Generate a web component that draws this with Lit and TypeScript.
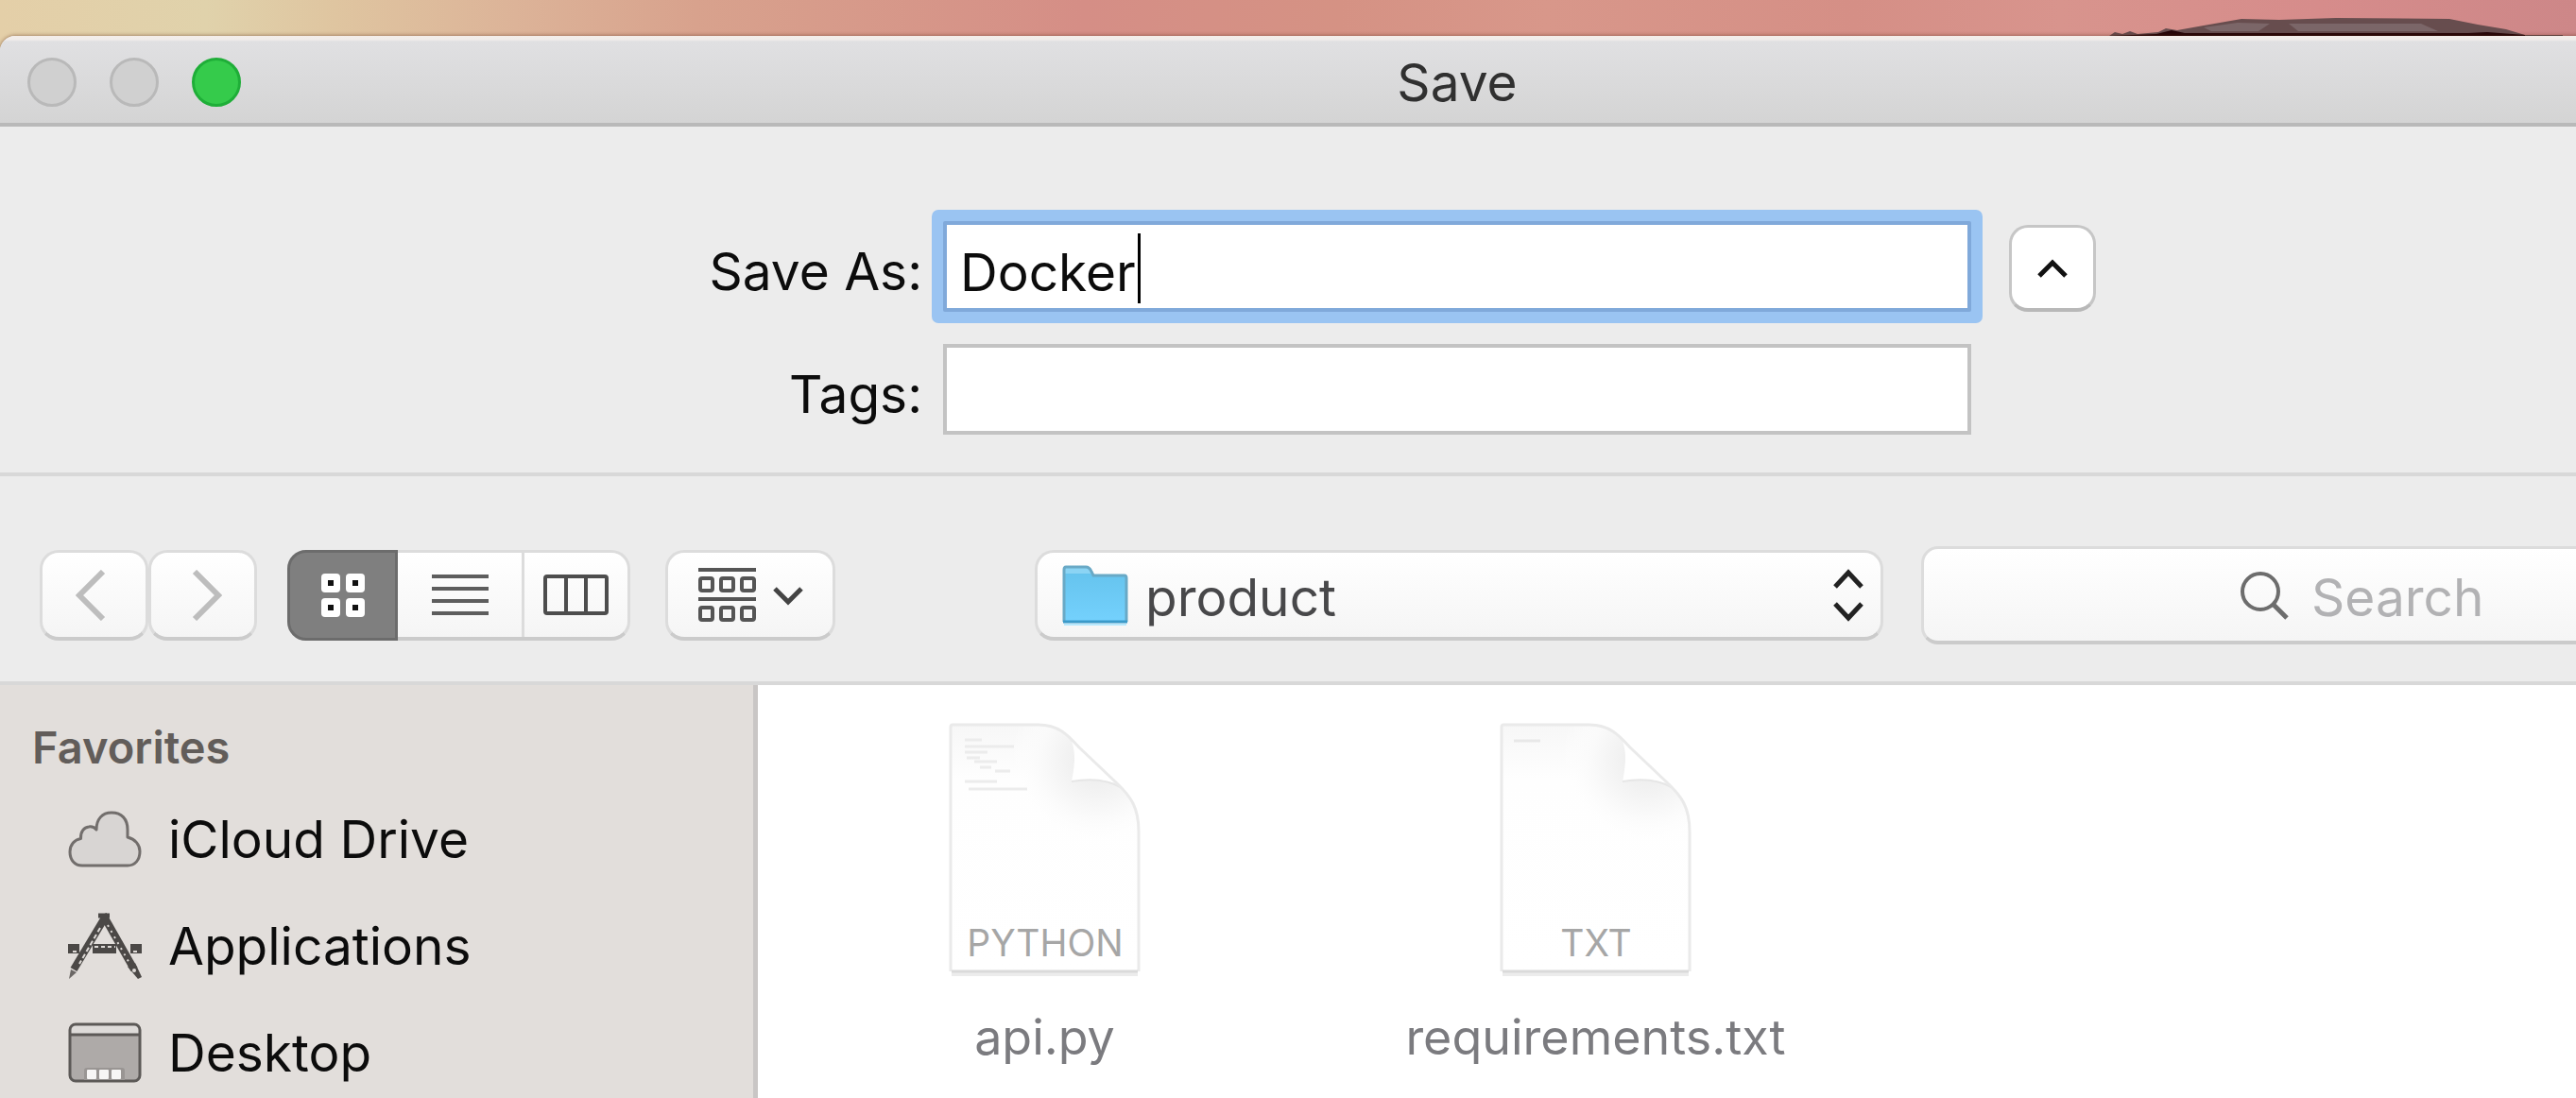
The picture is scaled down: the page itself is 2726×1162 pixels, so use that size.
import { LitElement, html, css, svg, nothing } from "lit";
import { customElement, property, state } from "lit/decorators.js";

interface Place {
  name: string;
  icon: unknown;
}

interface FileEntry {
  name: string;
  kind: string;
  preview: unknown;
}

const cloudIcon = html`<svg class="place-icon" width="78" height="72" viewBox="0 0 78 72" aria-hidden="true">
  <path
    d="M15 64C7 64 2 58 2 49.500C2 42 7 36.500 13.500 35.500C13 28 17 23.500 22 23C25 22.500 28 23.500 30 26C30 15 36 8 46 8C57 8 63 15 63 26L63 34C71 36 76 42 76 49C76 58 71 64 63 64Z"
    fill="#d8d5d3" stroke="#726e6c" stroke-width="3" stroke-linejoin="round" />
</svg>`;

const applicationsIcon = html`<svg class="place-icon" width="78" height="72" viewBox="0 0 78 72" aria-hidden="true">
  <g fill="none" stroke="#4b4846" stroke-linecap="butt">
    <path d="M39 6L6 61" stroke-width="8" />
    <path d="M37 3L70 61" stroke-width="8" />
    <path d="M32 4H44" stroke-width="5" />
    <path d="M0 39H12M26 39H51M66 39H78" stroke-width="10" />
  </g>
  <g fill="none" stroke="#dedad7" stroke-width="2">
    <path d="M34 17L12 55" stroke-dasharray="5 3" />
    <path d="M42 14L66 56" stroke-dasharray="2 5" />
    <path d="M5 42H10M28 37H50M69 42H73" stroke-dasharray="4 3" />
  </g>
  <path d="M1 71L3 61L9 64Z" fill="#6b6765" />
  <path d="M63 58L71 54L78 69L74 71Z" fill="#4b4846" />
  <circle cx="70" cy="62" r="2" fill="#dedad7" />
</svg>`;

const desktopIcon = html`<svg class="place-icon" width="78" height="72" viewBox="0 0 78 72" aria-hidden="true">
  <rect x="2" y="6" width="74" height="60" rx="6" fill="#aeaaa8" />
  <path d="M2 17V12Q2 6 8 6H70Q76 6 76 12V17Z" fill="#dedbd9" />
  <path d="M2 17H76" stroke="#5c5957" stroke-width="3" />
  <rect x="2" y="6" width="74" height="60" rx="6" fill="none" stroke="#5c5957" stroke-width="3" />
  <path d="M17 65V55Q17 52 20 52H57Q60 52 60 55V65Z" fill="#999593" />
  <g fill="#f7f6f5">
    <rect x="20" y="54" width="10" height="10" rx="1" />
    <rect x="33" y="54" width="10" height="10" rx="1" />
    <rect x="46" y="54" width="10" height="10" rx="1" />
  </g>
</svg>`;

const PLACES: Place[] = [
  { name: "iCloud Drive", icon: cloudIcon },
  { name: "Applications", icon: applicationsIcon },
  { name: "Desktop", icon: desktopIcon },
];

const FILES: FileEntry[] = [
  {
    name: "api.py",
    kind: "PYTHON",
    preview: svg`<g stroke="#ececec" stroke-width="3" fill="none">
      <path d="M18 19H36M18 26H70M18 32H42M20 38H34M28 42H52M34 48H46M50 52H66" />
      <path d="M18 63H52M22 71H84" />
    </g>`,
  },
  {
    name: "requirements.txt",
    kind: "TXT",
    preview: svg`<path d="M16 20H44" stroke="#e8e8e8" stroke-width="3" />`,
  },
];

@customElement("file-tile")
export class FileTile extends LitElement {
  @property({ attribute: false }) file?: FileEntry;

  static styles = css`
    :host {
      display: block;
    }
    .tile {
      display: flex;
      flex-direction: column;
      align-items: center;
      width: 100%;
      padding: 0;
      border: 0;
      background: none;
      font-family: inherit;
      color: #7b7b7f;
    }
    .sheet {
      display: block;
    }
    .kind {
      font-family: Inter, "Liberation Sans", sans-serif;
      font-size: 39px;
      fill: #a6a6a6;
    }
    .name {
      margin-top: 28px;
      font-size: 52px;
      line-height: 72px;
      white-space: nowrap;
    }
  `;

  render() {
    if (!this.file) return nothing;
    return html`<button class="tile" type="button" disabled>
      <svg class="sheet" width="206" height="270" viewBox="0 0 206 270" aria-hidden="true">
        <defs>
          <linearGradient id="top" x1="0" y1="0" x2="0" y2="1">
            <stop offset="0" stop-color="#f7f7f7" />
            <stop offset="0.22" stop-color="#fefefe" />
            <stop offset="1" stop-color="#ffffff" />
          </linearGradient>
          <radialGradient id="fold" gradientUnits="userSpaceOnUse" cx="158" cy="40" r="92">
            <stop offset="0" stop-color="#e9e9e9" />
            <stop offset="0.35" stop-color="#f2f2f2" />
            <stop offset="0.65" stop-color="#fafafa" />
            <stop offset="1" stop-color="#ffffff" stop-opacity="0" />
          </radialGradient>
        </defs>
        <path d="M5 3H96C118 3 128 15 139 27L178 64C194 79 202 91 202 116V264H3V5Z" fill="url(#top)" />
        <path d="M5 3H96C118 3 128 15 139 27L178 64C194 79 202 91 202 116V264H3V5Z" fill="url(#fold)" />
        ${this.file.preview}
        <path d="M131 20C136 34 134 48 131 63C148 61 163 61 178 65Z" fill="#ffffff" />
        <path d="M131 63C149 60 168 60 184 70" fill="none" stroke="#e6e6e6" stroke-width="2" />
        <path d="M3 264V5Q3 3 5 3H96C118 3 128 15 139 27L178 64C194 79 202 91 202 116V264" fill="none" stroke="#eaeaea" stroke-width="3" />
        <path d="M4 266H201" stroke="#ececec" stroke-width="6" />
        <path d="M4 264H201" stroke="#dadada" stroke-width="3" />
        <text class="kind" x="103" y="248" text-anchor="middle">${this.file.kind}</text>
      </svg>
      <span class="name">${this.file.name}</span>
    </button>`;
  }
}

@customElement("app-root")
export class AppRoot extends LitElement {
  @state() private fileName = "Docker";
  @state() private view = "icons";

  static styles = css`
    :host {
      display: flex;
      flex-direction: column;
      min-height: 100vh;
      overflow: hidden;
      background: #d9958b;
      font-family: Inter, "Liberation Sans", sans-serif;
      font-size: 55px;
      line-height: 72px;
      color: #0c0c0c;
    }
    * {
      box-sizing: border-box;
    }
    button,
    input,
    select {
      margin: 0;
      font: inherit;
      color: inherit;
    }
    svg {
      display: block;
      flex: none;
    }

    .wallpaper {
      display: flex;
      justify-content: flex-end;
      box-sizing: content-box;
      height: 38px;
      margin-bottom: -18px;
      padding: 0 14px 18px 0;
      background: linear-gradient(90deg, #e4cfa8 0%, #e0d2ab 8%, #dfc5a0 13%, #dcb398 20%, #d8a28d 27%, #d58e86 42%, #d59284 52%, #d8978a 60%, #d58f86 72%, #d8948d 80%, #d68c8b 90%, #cd8788 100%);
    }

    /* The dialog runs past the right edge of the screen. */
    .dialog {
      display: flex;
      flex: 1;
      flex-direction: column;
      width: calc(100% + 358px);
      border-radius: 16px 0 0 0;
      background: #ececec;
      box-shadow: 0 0 4px rgba(80, 30, 10, 0.6);
      overflow: hidden;
    }
    .titlebar {
      display: grid;
      grid-template-columns: 1fr auto 1fr;
      align-items: center;
      height: 96px;
      padding: 6px 29px 0;
      border-bottom: 4px solid #b9b9b9;
      background: linear-gradient(#f4eeea 0, #f1edeb 4px, #e0e0e2 6px, #d4d4d4 100%);
    }
    .lights {
      display: flex;
      gap: 35px;
    }
    .light {
      width: 52px;
      height: 52px;
      padding: 0;
      border: 3px solid #b9b9b9;
      border-radius: 50%;
      background: #d0d0d0;
    }
    .light.zoom {
      border-color: #1fae38;
      background: #35cb4b;
    }
    .title {
      margin: 0;
      font-size: 55px;
      font-weight: 400;
      color: #303030;
    }

    .form {
      display: grid;
      grid-template-columns: 1fr 1088px 1fr;
      row-gap: 34px;
      align-items: center;
      padding: 100px 0 40px;
      border-bottom: 4px solid #d8d8d8;
    }
    .label {
      padding: 10px 22px 0 0;
      text-align: right;
    }
    .field {
      position: relative;
    }
    .text {
      display: block;
      width: 100%;
      height: 96px;
      padding: 12px 14px 0;
      border: 4px solid #c3c3c3;
      border-radius: 0;
      outline: 0;
      background: #ffffff;
    }
    .text.focused {
      border-color: #80a9da;
      box-shadow: 0 0 0 12px #9ac4f2;
      border-radius: 2px;
      caret-color: transparent;
    }
    .caret {
      position: absolute;
      top: 13px;
      left: 206px;
      width: 3px;
      height: 74px;
      background: #000000;
    }
    .collapse {
      display: grid;
      place-items: center;
      width: 92px;
      height: 92px;
      margin: 4px 0 0 40px;
      padding: 0;
      border: 3px solid #c6c6c6;
      border-bottom: 4px solid #b8b8b8;
      border-radius: 20px;
      background: #ffffff;
    }

    .toolbar {
      display: flex;
      align-items: center;
      padding: 74px 117px 39px 42px;
      border-bottom: 4px solid #d8d8d8;
    }
    .control {
      display: flex;
      align-items: center;
      justify-content: center;
      height: 96px;
      padding: 0;
      border: 3px solid #dcdcdc;
      border-bottom: 4px solid #cbcbcb;
      border-radius: 20px;
      background: linear-gradient(#ffffff, #f5f5f5);
    }
    .step {
      width: 115px;
    }
    .back {
      padding-right: 8px;
    }
    .forward {
      padding-left: 8px;
    }
    .views {
      width: 363px;
      margin-left: 32px;
      align-items: stretch;
      justify-content: flex-start;
    }
    .view {
      display: grid;
      place-items: center;
      flex: 1 1 0;
      padding: 0;
      border: 0;
      border-left: 3px solid #dcdcdc;
      background: none;
    }
    .view.list {
      flex: 0 0 131px;
      border-left: 0;
    }
    .view.icons {
      flex: 0 0 117px;
      margin: -3px 0 -4px -3px;
      border: 3px solid #6c6c6c;
      border-radius: 20px 0 0 20px;
      background: #7f7f7f;
    }
    .arrange {
      width: 180px;
      margin-left: 37px;
      gap: 17px;
    }
    .folder {
      width: 898px;
      margin-left: 211px;
      padding: 0 18px 0 26px;
      gap: 18px;
    }
    .folder-select {
      flex: 1;
      min-width: 0;
      height: 76px;
      padding: 4px 0 0;
      border: 0;
      outline: 0;
      appearance: none;
      background: none;
      color: #48484a;
    }
    .search {
      flex: 1;
      height: 104px;
      margin-left: 40px;
      gap: 24px;
      border-radius: 18px;
    }
    .search-input {
      width: 184px;
      height: 76px;
      padding: 4px 0 0;
      border: 0;
      outline: 0;
      background: none;
    }
    .search-input::placeholder {
      color: #b2b2b4;
      opacity: 1;
    }

    .body {
      display: flex;
      flex: 1;
    }
    .sidebar {
      width: 802px;
      padding: 30px 34px 0;
      border-right: 5px solid #c9c6c5;
      background: #e2dedb;
    }
    .group {
      margin: 0;
      font-size: 47px;
      font-weight: 600;
      line-height: 72px;
      color: #625d5a;
    }
    .places {
      margin: 0;
      padding: 4px 0 0;
      list-style: none;
    }
    .place {
      display: flex;
      align-items: center;
      gap: 28px;
      height: 113px;
      padding-left: 38px;
      color: inherit;
      text-decoration: none;
    }
    .files {
      display: grid;
      flex: 1;
      grid-template-columns: repeat(auto-fill, 583px);
      align-content: start;
      padding: 39px 12px 0;
      background: #ffffff;
    }
  `;

  private onName(event: Event) {
    this.fileName = (event.target as HTMLInputElement).value;
  }

  private renderWallpaper() {
    return html`<div class="wallpaper">
      <svg width="480" height="38" viewBox="0 0 480 38" aria-hidden="true">
        <path d="M0 38L6 34L14 36L22 33L30 36L52 34L60 30L72 32L100 27L140 20L180 21L240 19L360 20L390 26L420 31L440 37L480 37V38Z" fill="#674d4e" />
        <path d="M100 29L136 24L170 25L158 33L108 33ZM190 25L330 25L348 33L200 33Z" fill="#7b6668" />
        <path d="M0 38L50 36L66 32L80 35H380L400 34L440 37V38Z" fill="#260609" />
      </svg>
    </div>`;
  }

  private renderForm() {
    return html`<section class="form">
      <label class="label" for="save-as">Save As:</label>
      <div class="field">
        <input id="save-as" class="text focused" type="text" autocomplete="off" spellcheck="false" .value=${this.fileName} @input=${this.onName} />
        <span class="caret"></span>
      </div>
      <button class="collapse" type="button" aria-label="Collapse">
        <svg width="32" height="22" viewBox="0 0 32 22"><path d="M2 19L16 5L30 19" fill="none" stroke="#111111" stroke-width="5" /></svg>
      </button>
      <label class="label" for="tags">Tags:</label>
      <input id="tags" class="text" type="text" autocomplete="off" />
    </section>`;
  }

  private renderToolbar() {
    const squares = [0, 26].flatMap((x) =>
      [0, 26].map(
        (y) => svg`<rect x=${x + 1} y=${y + 1} width="20" height="20" rx="4" fill="#ffffff" /><rect x=${x + 8} y=${y + 8} width="6" height="6" fill="#111111" />`
      )
    );
    const boxes = [11, 42].flatMap((y) =>
      [2, 24, 46].map((x) => svg`<rect x=${x} y=${y} width="13" height="13" rx="2" fill="none" stroke="#555555" stroke-width="4" />`)
    );
    return html`<nav class="toolbar">
      <button class="control step back" type="button" aria-label="Back">
        <svg width="32" height="54" viewBox="0 0 32 54"><path d="M29 2L4 27L29 52" fill="none" stroke="#bdbdbd" stroke-width="6" /></svg>
      </button>
      <button class="control step forward" type="button" aria-label="Forward">
        <svg width="32" height="54" viewBox="0 0 32 54"><path d="M3 2L28 27L3 52" fill="none" stroke="#bdbdbd" stroke-width="6" /></svg>
      </button>
      <div class="control views" role="group" aria-label="View">
        <button class="view icons" type="button" aria-label="Icons" aria-pressed=${this.view === "icons"} @click=${() => (this.view = "icons")}>
          <svg width="48" height="48" viewBox="0 0 48 48">${squares}</svg>
        </button>
        <button class="view list" type="button" aria-label="List" aria-pressed=${this.view === "list"} @click=${() => (this.view = "list")}>
          <svg width="60" height="44" viewBox="0 0 60 44"><path d="M0 2H60M0 15H60M0 28H60M0 41H60" stroke="#5d5d5d" stroke-width="4" /></svg>
        </button>
        <button class="view columns" type="button" aria-label="Columns" aria-pressed=${this.view === "columns"} @click=${() => (this.view = "columns")}>
          <svg width="69" height="43" viewBox="0 0 69 43">
            <rect x="2" y="2" width="65" height="39" rx="2" fill="none" stroke="#4d4d4d" stroke-width="4" />
            <path d="M24 2V41M45 2V41" stroke="#4d4d4d" stroke-width="4" />
          </svg>
        </button>
      </div>
      <button class="control arrange" type="button" aria-label="Arrange by">
        <svg width="62" height="58" viewBox="0 0 62 58">
          <path d="M0 2H61M0 33H61" stroke="#555555" stroke-width="4" />
          ${boxes}
        </svg>
        <svg width="32" height="22" viewBox="0 0 32 22"><path d="M2 4L16 18L30 4" fill="none" stroke="#444444" stroke-width="5" /></svg>
      </button>
      <div class="control folder">
        <svg width="70" height="64" viewBox="0 0 70 64" aria-hidden="true">
          <defs>
            <linearGradient id="folder-fill" x1="0" y1="0" x2="0" y2="1">
              <stop offset="0" stop-color="#66c4ee" />
              <stop offset="1" stop-color="#74d1fd" />
            </linearGradient>
          </defs>
          <path d="M1 60V5Q1 2 4 2H25Q29 2 31 7L33 11H66Q69 11 69 14V60Z" fill="#8bd4f4" />
          <path d="M1 9H30L33 12H69V60H1Z" fill="url(#folder-fill)" />
          <path d="M2 60V5Q2 2 4 2H25Q29 2 31 7L33 11H66Q68 11 68 14V60" fill="none" stroke="#69a9c6" stroke-width="3" />
          <path d="M1 60H69" stroke="#3b9ac9" stroke-width="3" />
          <path d="M2 63H68" stroke="#b7e8fd" stroke-width="2" />
        </svg>
        <select class="folder-select" aria-label="Folder">
          <option>product</option>
        </select>
        <svg width="32" height="56" viewBox="0 0 32 56" aria-hidden="true">
          <path d="M2 19L16 4L30 19M2 37L16 52L30 37" fill="none" stroke="#222222" stroke-width="5" />
        </svg>
      </div>
      <div class="control search">
        <svg width="52" height="52" viewBox="0 0 52 52" aria-hidden="true">
          <circle cx="22" cy="22" r="19" fill="none" stroke="#6d6d6d" stroke-width="4" />
          <path d="M35 35L50 50" stroke="#6d6d6d" stroke-width="5" />
        </svg>
        <input class="search-input" type="text" placeholder="Search" aria-label="Search" />
      </div>
    </nav>`;
  }

  render() {
    return html`
      ${this.renderWallpaper()}
      <main class="dialog">
        <header class="titlebar">
          <div class="lights">
            <button class="light" type="button" aria-label="Close"></button>
            <button class="light" type="button" aria-label="Minimize"></button>
            <button class="light zoom" type="button" aria-label="Zoom"></button>
          </div>
          <h1 class="title">Save</h1>
        </header>
        ${this.renderForm()} ${this.renderToolbar()}
        <div class="body">
          <aside class="sidebar">
            <h2 class="group">Favorites</h2>
            <ul class="places">
              ${PLACES.map((place) => html`<li><a class="place" href="#">${place.icon}<span>${place.name}</span></a></li>`)}
            </ul>
          </aside>
          <section class="files">${FILES.map((file) => html`<file-tile .file=${file}></file-tile>`)}</section>
        </div>
      </main>
    `;
  }
}
